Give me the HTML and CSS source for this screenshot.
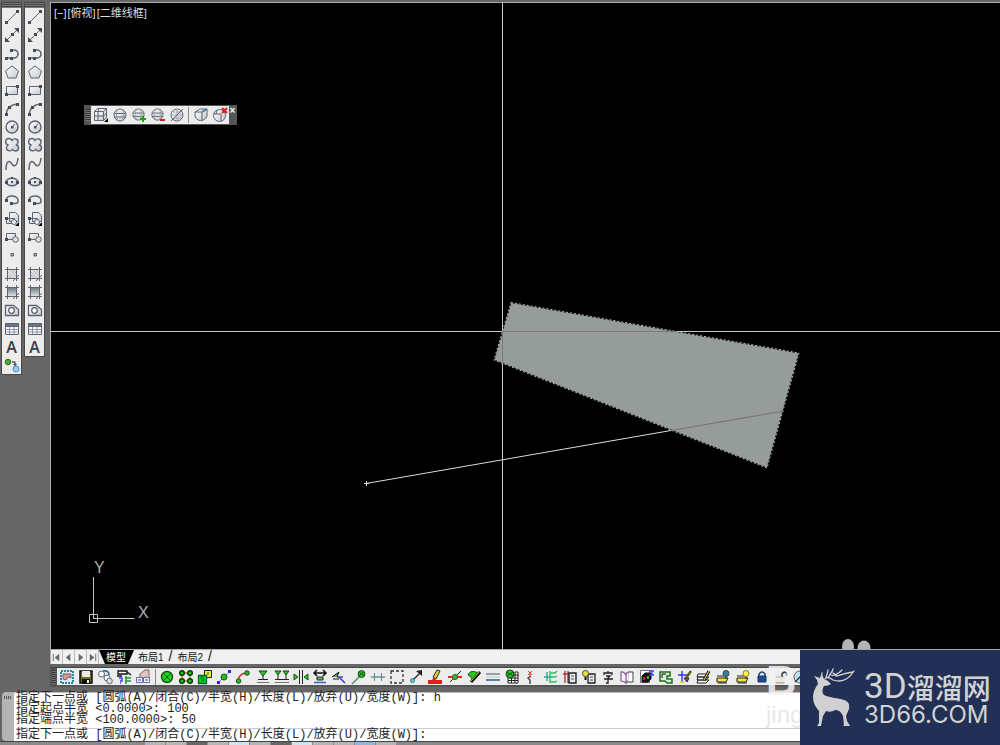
FILE: index.html
```html
<!DOCTYPE html>
<html lang="zh-CN">
<head>
<meta charset="utf-8">
<title>二维线框</title>
<link rel="stylesheet" href="styles.css">
</head>
<body>
<svg class="defs" aria-hidden="true">
  <defs>
    <linearGradient id="sheen" x1="0" y1="0" x2="1" y2="1"><stop offset="0" stop-color="#fff"/><stop offset="1" stop-color="#c3c8d0"/></linearGradient>
    <linearGradient id="shade" x1="0" y1="0" x2="0" y2="1"><stop offset="0" stop-color="#6f7782"/><stop offset="1" stop-color="#e4e6ea"/></linearGradient>
  </defs>
  <symbol id="line" viewBox="0 0 16 16"><path d="M3 13 13 3"/><path class="k" d="M1 12h3v3H1zM12 1h3v3h-3z"/></symbol>
  <symbol id="xline" viewBox="0 0 16 16"><path d="M3 13 13 3"/><path class="k" d="M1 10v5h5zM15 1v5l-5-5zM7 6h3v3H7z"/></symbol>
  <symbol id="pline" viewBox="0 0 16 16"><path stroke-width="1.600" d="M2 12h6M7 4h3a4 4 0 0 1 0 8H8"/><path class="k" d="M1 11h3v3H1zM6 11h3v3H6zM6 3h3v3H6z"/></symbol>
  <symbol id="polygon" viewBox="0 0 16 16"><path fill="url(#sheen)" d="M8 2l6.500 5-2.500 7H4L1.500 7z"/></symbol>
  <symbol id="rect" viewBox="0 0 16 16"><path fill="url(#sheen)" d="M2.500 4.500h11v8h-11z"/><path class="k" d="M1 11h3v3H1zM12 3h3v3h-3z"/></symbol>
  <symbol id="arc" viewBox="0 0 16 16"><path d="M2 14Q3 4 13 3" stroke-width="1.500"/><path class="k" d="M1 12h3v3H1zM4 5h3v3H4zM12 2h3v3h-3z"/></symbol>
  <symbol id="circle" viewBox="0 0 16 16"><circle cx="8" cy="8" r="6" fill="url(#sheen)" stroke-width="1.400"/><path d="M8 8l3-3"/><path class="k" d="M7 7h2.500v2.500H7z"/></symbol>
  <symbol id="cloud" viewBox="0 0 16 16"><path fill="url(#sheen)" d="M8 3.500C9.500 1 14.500 1.500 14 5c0 1.500-1 2.500-1.500 3 3 1 2.500 6-1 6-1.500 0-2-.5-3-1.500-1 2-6 2-6-1.500 0-1.500.5-2 1.500-3C.5 7 1 1.500 5 1.500c1.500 0 2.500 1 3 2z" stroke-width="1.400"/></symbol>
  <symbol id="spline" viewBox="0 0 16 16"><path stroke-width="1.500" d="M2 14C2 3 6 5 8 8s5 3 6-6"/></symbol>
  <symbol id="ellipse" viewBox="0 0 16 16"><ellipse cx="8" cy="8" rx="6" ry="3.800" fill="url(#sheen)" stroke-width="1.400"/><path class="k" d="M1 7h3v3H1zM12 7h3v3h-3zM7 7h2v2H7zM7 3h2v2H7z"/></symbol>
  <symbol id="earc" viewBox="0 0 16 16"><path stroke-width="1.500" d="M2 8c1-6 13-5 12 1 0 3-4 3-6 2"/><path class="k" d="M1 7h3v3H1zM6 10h3v3H6z"/></symbol>
  <symbol id="insert" viewBox="0 0 16 16"><path fill="url(#sheen)" d="M5.500 1.500h6l3 3v6h-9zM2.500 7.500h8v5h-8z"/><circle cx="10" cy="11" r="2.500" fill="#eee"/><path class="k" d="M1 6h3v3H1z"/><path fill="#000" stroke="none" d="M15 11v4h-4z"/></symbol>
  <symbol id="block" viewBox="0 0 16 16"><path fill="url(#sheen)" d="M2.500 4.500h9v6h-9z"/><circle cx="11.500" cy="10.500" r="2.800" fill="#ddd"/><path class="k" d="M1 9h3v3H1z"/></symbol>
  <symbol id="point" viewBox="0 0 16 16"><path fill="#aaa" d="M7 6.500h2.500V9H7z"/></symbol>
  <symbol id="hatch" viewBox="0 0 16 16"><path fill="#dfe1e5" d="M3.500 3.500h9v9h-9z"/><path d="M1 3.500h14M3.500 1v14M1 12.500h14M12.500 1v14"/><path stroke="#a2a7ae" stroke-width=".7" d="M4 6l6 6M4 9l3 3M6 4l6 6M9 4l3 3"/><path d="M9 15l6-6"/></symbol>
  <symbol id="gradient" viewBox="0 0 16 16"><path fill="url(#shade)" d="M3.500 3.500h9v9h-9z"/><path d="M1 3.500h14M3.500 1v14M1 12.500h14M12.500 1v14M9 15l6-6"/></symbol>
  <symbol id="region" viewBox="0 0 16 16"><path fill="url(#sheen)" d="M1.500 3.500h8l5 4v6h-13z" stroke-width="1.300"/><circle cx="7.500" cy="8.500" r="2.800" fill="#fff" stroke-width="1.300"/></symbol>
  <symbol id="table" viewBox="0 0 16 16"><path fill="#fff" d="M1.500 2.500h13v11h-13z"/><path d="M1.500 8.500h13M1.500 11h13M5.500 5v8M10 5v8" stroke="#89919c"/><path fill="#66758d" d="M1.500 2.500h13v3h-13z"/></symbol>
  <symbol id="addsel" viewBox="0 0 16 16"><circle cx="4" cy="5" r="2.800" fill="#4fa62d" stroke="#2f701b"/><circle cx="12" cy="12" r="3" fill="#9ccdf0" stroke="#478ac0"/><path stroke="#111" d="M8 5h3v3M9.500 7 11 8.500 12.500 7"/></symbol>

  <symbol id="cube" viewBox="0 0 16 16"><path fill="url(#sheen)" d="M1.500 4.500l3-3h9v9l-3 3h-9z"/><path d="M1.500 4.500h9v9M10.500 4.500l3-3M6 1.500l-1 3v9M1.500 9h9l3-3"/><path fill="#000" stroke="none" d="M15 11v4h-4z"/></symbol>
  <symbol id="sphere" viewBox="0 0 16 16"><circle cx="8" cy="8" r="6" fill="url(#sheen)"/><path d="M2 6.500h12M2 10h12"/><path stroke="#959ba5" d="M6 2.500C4 5 4 11 6 13.500M10 2.500c2 2 2 9 0 11"/></symbol>
  <symbol id="sphereadd" viewBox="0 0 16 16"><use href="#sphere" width="15" height="15"/><path stroke="#15a315" stroke-width="2" d="M9 12h6M12 9v6"/></symbol>
  <symbol id="spheredel" viewBox="0 0 16 16"><use href="#sphere" width="15" height="15"/><path stroke="#c9231d" stroke-width="2" d="M10 13h5"/></symbol>
  <symbol id="sphereoff" viewBox="0 0 16 16"><circle cx="8" cy="8" r="6" fill="url(#sheen)"/><path stroke="#a5abb4" d="M4 5h8M3 8h10M5 11h7M8 2v12"/><path d="M2 14 14 2"/></symbol>
  <symbol id="cubeball" viewBox="0 0 16 16"><path fill="url(#sheen)" d="M2 5l5-3h7v7c-2 6-11 6-12 0z"/><path d="M2 5h7v9"/><path stroke="#2f83c6" stroke-width="1.500" d="M9 5l5-3"/></symbol>
  <symbol id="cubex" viewBox="0 0 16 16"><circle cx="7.500" cy="8.500" r="6" fill="url(#sheen)"/><path d="M2 7h7v7M5 3l-1 4"/><path stroke="#d92424" stroke-width="2.200" d="M10 1l5 5M15 1l-5 5"/></symbol>

  <symbol id="b1" viewBox="0 0 16 16"><path fill="#d7ecf5" stroke="#2b84aa" stroke-width="2" stroke-dasharray="2 1" d="M2 2h12v12H2z"/><path fill="#d99a94" stroke="#8f5a58" d="M4 5h8v4l-3-1-2 3-3-1z"/></symbol>
  <symbol id="b2" viewBox="0 0 16 16"><path fill="#6d6b14" stroke="#111" stroke-width="1.500" d="M2 2h12v12H2z"/><path fill="#e9e9e9" stroke="none" d="M4 2h8v6H4z"/><path fill="#111" stroke="none" d="M4 10h8v5H4z"/><path fill="#fff" stroke="none" d="M9 11h2v3H9z"/></symbol>
  <symbol id="b3" viewBox="0 0 16 16"><circle cx="4.500" cy="5" r="3" fill="#fff"/><circle cx="10" cy="9" r="3" fill="#fff"/><circle cx="12.500" cy="12" r="2.800" fill="#d8e5ec"/><path stroke="#2a65b0" stroke-width="1.600" d="M6 2q6-1 6 4"/></symbol>
  <symbol id="b4" viewBox="0 0 16 16"><path fill="#fff" stroke="#111" stroke-width="1.300" d="M2 2h9v3H2zM1 7h5M11 3l4 3"/><path stroke="#1e9a31" stroke-width="1.500" d="M9 9h6M9 12h6M10 7v8"/><path stroke="#33f" stroke-width="1.300" d="M3 9h3v3H4M4 14h1"/></symbol>
  <symbol id="b5" viewBox="0 0 16 16"><path fill="#ddc3bd" stroke="#8c6663" d="M5 5l5-4h4v8H5z"/><path fill="#fff" stroke="#6268a8" d="M1.500 8.500h6v5h-6zM8.500 8.500h6v5h-6z"/><path stroke="#22f" d="M3 11h3M10 11h3"/></symbol>
  <symbol id="b6" viewBox="0 0 16 16"><circle cx="8" cy="8" r="5.500" fill="#16d816" stroke="#0c560c" stroke-width="1.400"/><path stroke="#0c560c" d="M4 4l8 8M12 4l-8 8"/></symbol>
  <symbol id="b7" viewBox="0 0 16 16"><path stroke="#c22" d="M4 4h8v8H4z"/><g fill="#16c916" stroke="#063f06" stroke-width="1.500"><circle cx="4" cy="4" r="2.300"/><circle cx="12" cy="4" r="2.300"/><circle cx="4" cy="12" r="2.300"/><circle cx="12" cy="12" r="2.300"/></g></symbol>
  <symbol id="b8" viewBox="0 0 16 16"><path fill="#f3ed23" stroke="#222" d="M7.500 1.500h7v7h-7z"/><path fill="#18d718" stroke="#063" stroke-width="1.300" d="M1.500 6.500h8v8h-8z"/><path stroke="#064" d="M7 8H4v2h3v2H4M11 3v3"/></symbol>
  <symbol id="b9" viewBox="0 0 16 16"><path stroke="#777" d="M2 14 14 2"/><circle cx="8" cy="8" r="3" fill="#24bd24" stroke="#155d15"/><path fill="#22f" stroke="none" d="M1 12h3v3H1zM12 1h3v3h-3z"/></symbol>
  <symbol id="b10" viewBox="0 0 16 16"><path stroke="#d22" stroke-width="1.500" d="M3 12Q4 4 12 4"/><circle cx="12" cy="4" r="2.300" fill="#2b2" stroke="#151"/><circle cx="3.500" cy="12" r="2.300" fill="#2b2" stroke="#151"/></symbol>
  <symbol id="b11" viewBox="0 0 16 16"><path fill="#20d020" stroke="#154815" d="M4 2h8L8 7z"/><path stroke="#222" d="M8 7v4M3 10.500h10"/><path stroke="#777" d="M2 13.500h12"/></symbol>
  <symbol id="b12" viewBox="0 0 16 16"><path fill="#20d020" stroke="#154815" d="M1 2h6L4 6zM9 2h6l-3 4z"/><path stroke="#222" d="M4 6v4M12 6v4M1 10.500h14"/><path stroke="#777" d="M1 13.500h14"/></symbol>
  <symbol id="b13" viewBox="0 0 16 16"><path stroke="#222" d="M6.500 1v14M9.500 1v14"/><path fill="#23d423" stroke="#174f17" d="M1 5v6l4-3zM15 5v6l-4-3z"/></symbol>
  <symbol id="b14" viewBox="0 0 16 16"><path stroke="#111" stroke-width="1.500" d="M2 4h12M5 1 2 4l3 3M11 1l3 3-3 3"/><path fill="#5ac05a" stroke="#222" d="M5 8h6v3H5z"/><path stroke="#36c" stroke-width="1.500" d="M2 13.500h12"/></symbol>
  <symbol id="b15" viewBox="0 0 16 16"><path fill="#51b451" stroke="#111" d="M1 8l7-5-2 5h6"/><path stroke="#33e" stroke-width="1.500" d="M8 8l6 6"/><path stroke="#111" d="M2 10h6"/></symbol>
  <symbol id="b16" viewBox="0 0 16 16"><path stroke="#58917b" stroke-width="1.600" d="M1 15 9 7"/><circle cx="10.500" cy="5" r="3.500" fill="#21c821" stroke="#145714"/><path stroke="#145714" d="M8 3l5 4M13 3 8 7"/></symbol>
  <symbol id="b17" viewBox="0 0 16 16"><path stroke="#a85aa8" d="M4.500 4v8M11.500 4v8"/><path stroke="#4a9999" stroke-width="1.400" d="M1 8h14"/></symbol>
  <symbol id="b18" viewBox="0 0 16 16"><path stroke="#333" stroke-width="1.300" stroke-dasharray="3 2" d="M2 2h12v12H2z"/></symbol>
  <symbol id="b19" viewBox="0 0 16 16"><path stroke="#333" stroke-width="1.500" d="M5 11l7-7"/><path fill="#222" stroke="none" d="M14 1v6L8 2z"/><circle cx="4.500" cy="11.500" r="2" fill="#66cde0" stroke="#287c90"/></symbol>
  <symbol id="b20" viewBox="0 0 16 16"><path fill="#ead62a" stroke="#222" d="M6 8l4-7 3 1-4 8z"/><path fill="#e01d16" stroke="none" d="M1 11h4l2-3 2 3h6v4H1z"/></symbol>
  <symbol id="b21" viewBox="0 0 16 16"><path stroke="#e22" stroke-width="2" d="M1 8h14"/><path stroke="#222" d="M3 13 14 2"/><circle cx="8" cy="8" r="2.600" fill="#37bb23" stroke="#286817"/></symbol>
  <symbol id="b22" viewBox="0 0 16 16"><path fill="#24cb24" stroke="#126012" d="M2 6q2-5 8-3l2 1-5 8-2-4z"/><path stroke="#111" stroke-width="3" d="M5 13l9-10"/><path stroke="#e9d332" d="M5 12l8-9"/></symbol>
  <symbol id="b23" viewBox="0 0 16 16"><path stroke="#789" stroke-width="1.500" d="M1 5h14"/><path stroke="#d9cba7" d="M1 8h14"/><path stroke="#5682b5" stroke-width="2" d="M1 11h14"/></symbol>
  <symbol id="b24" viewBox="0 0 16 16"><path fill="#fff" stroke="#222" d="M4 6h10v8H4zM4 9h10M4 11.500h10M7.500 6v8M11 3v11M11 3h3v4"/><circle cx="6" cy="5" r="4" fill="#1fcd1f" stroke="#164716"/><path stroke="#164716" d="M3 3l6 4M9 3 3 7"/></symbol>
  <symbol id="b25" viewBox="0 0 16 16"><path stroke="#e33" d="M5 2l4 4M9 2 5 6M7 5v3"/><path stroke="#444" stroke-width="1.400" d="M8 7l-3 2 2 2v4"/></symbol>
  <symbol id="b26" viewBox="0 0 16 16"><path stroke="#3a9ea5" stroke-width="1.400" d="M1 8h7M4 3v9"/><path stroke="#30bd60" stroke-width="1.300" d="M14 2l-2 2H7M14 7l-2 1H7M14 12l-2 1H7M7 2v12"/></symbol>
  <symbol id="b27" viewBox="0 0 16 16"><path stroke="#b23b3b" stroke-width="1.400" d="M1 5h6M3 2v12M6 2v12"/><path fill="#e8e8e8" stroke="#222" stroke-width="1.400" d="M7 4h7v10H7z"/><path stroke="#555" d="M9 7h3M9 10h3"/></symbol>
  <symbol id="b28" viewBox="0 0 16 16"><path fill="#e8e8e8" stroke="#222" stroke-width="1.300" d="M7 5h7v9H7z"/><path stroke="#555" d="M9 8h3M9 11h3"/><circle cx="4.500" cy="4.500" r="3" fill="#eee13e" stroke="#443"/><path stroke="#111" stroke-width="2" d="M4.500 8v3"/></symbol>
  <symbol id="b29" viewBox="0 0 16 16"><path stroke="#222" stroke-width="1.300" d="M8 2v2M4 6V4h8v2M6 7h4l-2 2v5H6M4 10h9"/></symbol>
  <symbol id="b30" viewBox="0 0 16 16"><path fill="#f6f6f6" stroke="#845a91" stroke-width="1.200" d="M2 3q3-1 5 3v8q-2-2-5-2zM7 6q0-3 3-3v8l-3 3"/><path fill="#fff" stroke="#444" d="M10 3h4v10H9"/></symbol>
  <symbol id="b31" viewBox="0 0 16 16"><path fill="#fff" stroke="#777" d="M1.500 1.500h9v12h-9z"/><path fill="#111" stroke="#111" d="M3 7l3-3h6v6l-3 3H3z"/><path fill="#e22" stroke="none" d="M4 8h2v3H4z"/><path fill="#2b2" stroke="none" d="M8 7h2v3H8z"/><path stroke="#34f" stroke-width="1.300" d="M10 2h5M13 2v4M10 6h5"/></symbol>
  <symbol id="b32" viewBox="0 0 16 16"><path fill="#d7edd7" stroke="#1d6f1d" stroke-width="1.500" d="M2 3h10v4H9v3h5v4H9l-2-2H2z"/><path stroke="#111" d="M4 5h4M4 5v4"/></symbol>
  <symbol id="b33" viewBox="0 0 16 16"><path stroke="#33f" stroke-width="1.400" d="M1 6h10M5 2v12"/><path fill="#8048a4" stroke="#222" d="M7 9l3 4 2-4z"/><path stroke="#55631d" stroke-width="2.500" d="M9 9l5-7"/><path stroke="#ed2" stroke-width="1.500" d="M3 13h5"/></symbol>
  <symbol id="b34" viewBox="0 0 16 16"><path fill="#fff" stroke="#222" d="M2 5h11l-3 3H1zM2 8h11l-3 3H1zM2 11h11l-3 3H1z"/><path stroke="#222" stroke-width="3" d="M8 11l5-9"/><path stroke="#e8d744" d="M8 11l5-9"/></symbol>
  <symbol id="b35" viewBox="0 0 16 16"><path fill="#efe63c" stroke="#222" d="M2 9h11l-2 4H2z"/><path stroke="#222" d="M2 7h10M3 14h9"/><circle cx="11" cy="4.500" r="3" fill="#377f91" stroke="#244e59"/><path stroke="#222" d="M11 8v2"/></symbol>
  <symbol id="b36" viewBox="0 0 16 16"><path fill="#efe63c" stroke="#222" d="M2 9h11l-2 4H2z"/><path stroke="#222" d="M2 7h10M3 14h9"/><circle cx="11" cy="4.500" r="3" fill="#fff64b" stroke="#877c22"/><path stroke="#222" d="M11 8v2"/></symbol>
  <symbol id="b37" viewBox="0 0 16 16"><path stroke="#234579" stroke-width="1.500" d="M5 8V5q3-4 6 0v3"/><path fill="#164e96" stroke="#183663" d="M4 7h8v6H4z"/></symbol>
  <symbol id="b38" viewBox="0 0 16 16"><path stroke="#333" stroke-width="1.500" d="M9 8V5q3-4 5 0v2"/><path fill="#cbbe72" stroke="#aaa" d="M3 8h8v6H3z"/></symbol>
  <symbol id="b39" viewBox="0 0 16 16"><circle cx="8" cy="8" r="6" fill="#bde4e9"/><path stroke="#333" stroke-width="1.400" d="M3 13 13 3"/></symbol>
</svg>

<main class="workspace">
  <aside class="palettes">
    <nav class="palette" aria-label="绘图">
      <span class="grip"></span>
      <button aria-label="直线"><svg><use href="#line"/></svg></button>
      <button aria-label="构造线"><svg><use href="#xline"/></svg></button>
      <button aria-label="多段线"><svg><use href="#pline"/></svg></button>
      <button aria-label="多边形"><svg><use href="#polygon"/></svg></button>
      <button aria-label="矩形"><svg><use href="#rect"/></svg></button>
      <button aria-label="圆弧"><svg><use href="#arc"/></svg></button>
      <button aria-label="圆"><svg><use href="#circle"/></svg></button>
      <button aria-label="修订云线"><svg><use href="#cloud"/></svg></button>
      <button aria-label="样条曲线"><svg><use href="#spline"/></svg></button>
      <button aria-label="椭圆"><svg><use href="#ellipse"/></svg></button>
      <button aria-label="椭圆弧"><svg><use href="#earc"/></svg></button>
      <button aria-label="插入块"><svg><use href="#insert"/></svg></button>
      <button aria-label="创建块"><svg><use href="#block"/></svg></button>
      <button aria-label="点"><svg><use href="#point"/></svg></button>
      <button aria-label="图案填充"><svg><use href="#hatch"/></svg></button>
      <button aria-label="渐变色"><svg><use href="#gradient"/></svg></button>
      <button aria-label="面域"><svg><use href="#region"/></svg></button>
      <button aria-label="表格"><svg><use href="#table"/></svg></button>
      <button aria-label="多行文字" class="letter">A</button>
      <button aria-label="添加选定对象"><svg><use href="#addsel"/></svg></button>
    </nav>
    <nav class="palette" aria-label="绘图 2">
      <span class="grip"></span>
      <button aria-label="直线"><svg><use href="#line"/></svg></button>
      <button aria-label="构造线"><svg><use href="#xline"/></svg></button>
      <button aria-label="多段线"><svg><use href="#pline"/></svg></button>
      <button aria-label="多边形"><svg><use href="#polygon"/></svg></button>
      <button aria-label="矩形"><svg><use href="#rect"/></svg></button>
      <button aria-label="圆弧"><svg><use href="#arc"/></svg></button>
      <button aria-label="圆"><svg><use href="#circle"/></svg></button>
      <button aria-label="修订云线"><svg><use href="#cloud"/></svg></button>
      <button aria-label="样条曲线"><svg><use href="#spline"/></svg></button>
      <button aria-label="椭圆"><svg><use href="#ellipse"/></svg></button>
      <button aria-label="椭圆弧"><svg><use href="#earc"/></svg></button>
      <button aria-label="插入块"><svg><use href="#insert"/></svg></button>
      <button aria-label="创建块"><svg><use href="#block"/></svg></button>
      <button aria-label="点"><svg><use href="#point"/></svg></button>
      <button aria-label="图案填充"><svg><use href="#hatch"/></svg></button>
      <button aria-label="渐变色"><svg><use href="#gradient"/></svg></button>
      <button aria-label="面域"><svg><use href="#region"/></svg></button>
      <button aria-label="表格"><svg><use href="#table"/></svg></button>
      <button aria-label="多行文字" class="letter">A</button>
    </nav>
  </aside>

  <section class="stage">
    <div class="canvas">
      <svg class="drawing" aria-label="图形">
        <g transform="translate(-51 -3)">
          <path fill="#959c99" d="M511 302.500 799 353 767 468 494 360z"/>
          <path class="edge-gap" d="M511 302.500 799 353 767 468 494 360z"/>
          <path class="edge" d="M511 302.500 799 353 767 468 494 360z"/>
          <g class="cross"><path d="M51 331.500h452M677 331.500h2000M502.500 3v328M502.500 363v1600"/></g>
          <g class="cross-in"><path d="M503 331.500h174M502.500 331v32"/></g>
          <path class="ray" d="M366 483.500 671 430.500"/>
          <path class="ray-in" d="M671 430.500 784 411"/>
          <path class="ray" d="M364 483.500h5M366.500 481v5"/>
          <g class="ucs">
            <path d="M93.500 577v41.500h41M89.500 614.500h8v8h-8zM93.500 618.500h4"/>
            <text x="94" y="573">Y</text><text x="138" y="618">X</text>
          </g>
          <g fill="#b4b4b4"><ellipse cx="848" cy="647" rx="6" ry="8"/><ellipse cx="864" cy="648" rx="6.500" ry="7.500"/></g>
        </g>
      </svg>
      <div class="view-label"><button>[−]</button><button>[俯视]</button><button>[二维线框]</button></div>
      <div class="float-bar" role="toolbar" aria-label="曲面">
        <span class="float-grip"></span>
        <div class="float-tools">
          <button aria-label="长方体"><svg><use href="#cube"/></svg></button>
          <button aria-label="平滑对象"><svg><use href="#sphere"/></svg></button>
          <button aria-label="提高平滑度"><svg><use href="#sphereadd"/></svg></button>
          <button aria-label="降低平滑度"><svg><use href="#spheredel"/></svg></button>
          <button aria-label="优化网格"><svg><use href="#sphereoff"/></svg></button>
          <i class="rule"></i>
          <button aria-label="添加锐化"><svg><use href="#cubeball"/></svg></button>
          <button aria-label="删除锐化"><svg><use href="#cubex"/></svg></button>
        </div>
        <button class="close" aria-label="关闭">×</button>
      </div>
    </div>

    <nav class="tabs" aria-label="布局">
      <button class="step" aria-label="第一个"><svg viewBox="0 0 12 12"><path d="M2.500 2v8"/><path class="tri" d="M9 2v8L4 6z"/></svg></button>
      <button class="step" aria-label="上一个"><svg viewBox="0 0 12 12"><path class="tri" d="M8 2v8L3 6z"/></svg></button>
      <button class="step" aria-label="下一个"><svg viewBox="0 0 12 12"><path class="tri" d="M4 2v8l5-4z"/></svg></button>
      <button class="step" aria-label="最后一个"><svg viewBox="0 0 12 12"><path d="M9.500 2v8"/><path class="tri" d="M3 2v8l5-4z"/></svg></button>
      <button class="tab active">模型</button>
      <button class="tab">布局1</button><span class="slash">/</span>
      <button class="tab">布局2</button><span class="slash">/</span>
    </nav>

    <div class="tools" role="toolbar" aria-label="扩展工具">
      <span class="tools-grip"></span>
      <div class="set">
        <button aria-label="图像"><svg><use href="#b1"/></svg></button>
        <button aria-label="保存"><svg><use href="#b2"/></svg></button>
        <button aria-label="替换"><svg><use href="#b3"/></svg></button>
        <button aria-label="查询"><svg><use href="#b4"/></svg></button>
        <button aria-label="比较"><svg><use href="#b5"/></svg></button>
      </div>
      <i class="rule"></i>
      <div class="set wide">
        <button aria-label="工具 1"><svg><use href="#b6"/></svg></button>
        <button aria-label="工具 2"><svg><use href="#b7"/></svg></button>
        <button aria-label="工具 3"><svg><use href="#b8"/></svg></button>
        <button aria-label="工具 4"><svg><use href="#b9"/></svg></button>
        <button aria-label="工具 5"><svg><use href="#b10"/></svg></button>
        <button aria-label="工具 6"><svg><use href="#b11"/></svg></button>
        <button aria-label="工具 7"><svg><use href="#b12"/></svg></button>
        <button aria-label="工具 8"><svg><use href="#b13"/></svg></button>
        <button aria-label="工具 9"><svg><use href="#b14"/></svg></button>
        <button aria-label="工具 10"><svg><use href="#b15"/></svg></button>
        <button aria-label="工具 11"><svg><use href="#b16"/></svg></button>
        <button aria-label="工具 12"><svg><use href="#b17"/></svg></button>
        <button aria-label="工具 13"><svg><use href="#b18"/></svg></button>
        <button aria-label="工具 14"><svg><use href="#b19"/></svg></button>
        <button aria-label="工具 15"><svg><use href="#b20"/></svg></button>
        <button aria-label="工具 16"><svg><use href="#b21"/></svg></button>
        <button aria-label="工具 17"><svg><use href="#b22"/></svg></button>
        <button aria-label="工具 18"><svg><use href="#b23"/></svg></button>
        <button aria-label="工具 19"><svg><use href="#b24"/></svg></button>
        <button aria-label="工具 20"><svg><use href="#b25"/></svg></button>
        <button aria-label="工具 21"><svg><use href="#b26"/></svg></button>
        <button aria-label="工具 22"><svg><use href="#b27"/></svg></button>
        <button aria-label="工具 23"><svg><use href="#b28"/></svg></button>
        <button aria-label="工具 24"><svg><use href="#b29"/></svg></button>
        <button aria-label="工具 25"><svg><use href="#b30"/></svg></button>
        <button aria-label="工具 26"><svg><use href="#b31"/></svg></button>
        <button aria-label="工具 27"><svg><use href="#b32"/></svg></button>
        <button aria-label="工具 28"><svg><use href="#b33"/></svg></button>
        <button aria-label="工具 29"><svg><use href="#b34"/></svg></button>
        <button aria-label="工具 30"><svg><use href="#b35"/></svg></button>
        <button aria-label="工具 31"><svg><use href="#b36"/></svg></button>
        <button aria-label="锁定"><svg><use href="#b37"/></svg></button>
        <button aria-label="解锁"><svg><use href="#b38"/></svg></button>
        <button aria-label="工具 34"><svg><use href="#b39"/></svg></button>
      </div>
    </div>
  </section>
</main>

<section class="command" aria-label="命令行">
  <span class="command-grip"></span>
  <div class="console">
    <div class="history">
      <p>指定下一点或 [圆弧(A)/闭合(C)/半宽(H)/长度(L)/放弃(U)/宽度(W)]: h</p>
      <p>指定起点半宽 &lt;0.0000&gt;: 100</p>
      <p>指定端点半宽 &lt;100.0000&gt;: 50</p>
    </div>
    <p class="prompt">指定下一点或 [圆弧(A)/闭合(C)/半宽(H)/长度(L)/放弃(U)/宽度(W)]:</p>
  </div>
</section>
<footer class="status"><i></i><i></i><i class="dark"></i><i></i><i class="lit"></i><i></i><i class="dark"></i><i class="lit"></i><i></i><i></i><i class="blue"></i><i></i></footer>

<div class="watermark" aria-hidden="true"><span class="wm-big">B</span><span class="wm-small">jing</span></div>
<div class="badge">
  <svg class="deer" viewBox="0 0 44 60" role="img" aria-label="鹿">
    <path fill="#d0d0d0" d="M2 9l6 2 1-3 3 4 4 2 3 3-3 1.500-4 .5c-2 3-2 7 0 9 6 3 14 3 20 5 4 1 6 4 5 9l-3 7 1 5 3 5h-7l1-1-1-9c-2-4-4-6-8-6-3 2-6 2-9 1l-3 5-2 10H5l2-3V44C3 40 1 35 1 30c0-5 2-9 5-13l-1-4z"/>
    <path fill="none" stroke="#d0d0d0" stroke-width="1.300" stroke-linecap="round" d="M11 12c-1-3-2-4-1-6M13 12c2-3 5-1 8 1 9 3 16-1 21-9M14 11c0-3 2-4 2-8M17 11c-1-4 3-4 4-9M21 6l3 2M19 8c3 1 7-1 11-5M24 9c5-1 9-3 17-4"/>
  </svg>
  <div class="brand">
    <div class="brand-top"><span class="latin">3D</span><span class="han">溜溜网</span></div>
    <div class="brand-url">3D66.COM</div>
  </div>
</div>
</body>
</html>
```
FILE: styles.css
```css
* { box-sizing: border-box; }

body {
  margin: 0;
  height: 100vh;
  display: flex;
  flex-direction: column;
  overflow: hidden;
  background: #666;
  font-family: "Liberation Sans", "Noto Sans CJK SC", sans-serif;
}

.defs { position: absolute; width: 0; height: 0; }

.k { fill: #454d59; stroke: none; }

button {
  border: 0;
  margin: 0;
  padding: 0;
  background: none;
  color: inherit;
  font: inherit;
}

button svg {
  display: block;
  width: 16px;
  height: 16px;
  fill: none;
  stroke: #5c6470;
  overflow: visible;
}

p { margin: 0; }

.workspace { flex: 1; display: flex; min-height: 0; padding-top: 2px; }

.palettes {
  flex: none;
  width: 50px;
  display: flex;
  align-items: flex-start;
  gap: 2px;
  padding-left: 1px;
}

.palette {
  width: 21px;
  display: flex;
  flex-direction: column;
  background: #ececec;
  border: 1px solid #484848;
  border-top: 0;
}

.palette button {
  flex: none;
  height: 18px;
  display: grid;
  place-items: center;
}

.palette button:nth-child(3n + 4) { height: 19px; }

.grip {
  height: 6px;
  background: repeating-linear-gradient(#444 0 1px, #777 1px 2px);
}

.palette .letter {
  font: 600 16px/18px "Open Sans", sans-serif;
  color: #383d44;
}

.stage { flex: 1; min-width: 0; display: flex; flex-direction: column; }

.canvas {
  flex: 1;
  position: relative;
  min-height: 0;
  overflow: hidden;
  background: #000;
  border-top: 1px solid #aaa;
  border-left: 1px solid #aaa;
}

.drawing { position: absolute; inset: 0; width: 100%; height: 100%; fill: none; }
.edge-gap { stroke: #000; }
.edge { stroke: #bcc1bf; stroke-dasharray: 2 2; }
.cross { stroke: #c8c8c8; }
.cross-in { stroke: #787978; }
.ray { stroke: #ddd; }
.ray-in { stroke: #727272; }
.ucs { stroke: #c4c4c4; }
.ucs text { fill: #b0b0b0; stroke: none; font: 16px "Liberation Sans", sans-serif; }

.view-label {
  position: relative;
  display: flex;
  gap: 1px;
  padding: 3px;
  color: #ddd;
  font: 11px/14px "Liberation Sans", "Noto Sans CJK SC", sans-serif;
}

.float-bar {
  position: absolute;
  left: 33px;
  top: 102px;
  display: flex;
  height: 20px;
  background: #ececec;
  border: 1px solid #555;
}

.float-grip {
  width: 6px;
  border: 1px solid #555;
  border-width: 3px 1px;
  background: repeating-linear-gradient(#333 0 1px, #777 1px 2px);
}

.float-tools { display: flex; align-items: center; }
.float-tools button { width: 19px; display: grid; place-items: center; }
.rule { width: 1px; height: 16px; margin: 0 2px; background: #888; }

.close {
  width: 7px;
  background: #555;
  color: #fff;
  font: 700 10px/10px "Liberation Sans", sans-serif;
  align-self: stretch;
  display: flex;
  justify-content: center;
}

.tabs {
  height: 15px;
  display: flex;
  align-items: stretch;
  background: #f0f0f0;
  border-left: 1px solid #aaa;
  border-top: 1px solid #aaa;
  font: 10px/13px "Liberation Sans", "Noto Sans CJK SC", sans-serif;
  color: #111;
}

.step { width: 12px; display: grid; place-items: center; border-right: 1px solid #bbb; }
.step svg { width: 11px; height: 11px; stroke: #666; }
.step .tri { fill: #666; stroke: none; }
.tab { padding: 0 4px; }

.tab.active {
  padding: 0 8px 0 7px;
  background: #000;
  color: #fff;
  clip-path: polygon(0 0, 100% 0, calc(100% - 6px) 100%, 6px 100%);
}

.slash { font-size: 14px; padding: 0 1px; }

.tools {
  height: 20px;
  margin: 3px 0 5px;
  display: flex;
  align-items: center;
  background: #ececec;
  border-top: 1px solid #444;
  border-bottom: 2px solid #555;
  overflow: hidden;
}

.tools-grip {
  flex: none;
  width: 7px;
  height: 18px;
  border: 2px solid #555;
  background: repeating-linear-gradient(#333 0 1px, #777 1px 2px);
}

.set { flex: none; width: 96px; display: flex; }
.set.wide { width: 653px; }
.set button { flex: 1; display: grid; place-items: center; }
.tools .rule { margin: 0 1px 0 2px; }

.command {
  height: 50px;
  display: flex;
  padding-left: 2px;
  border-bottom: 1px solid #444;
}

.command-grip {
  width: 12px;
  padding: 4px 2px;
  background: #b4b4b4;
  border-radius: 4px 0 0 4px;
}

.command-grip::before {
  content: "";
  display: block;
  height: 3px;
  background: repeating-linear-gradient(90deg, #555 0 1px, #b4b4b4 1px 2px);
}

.console {
  flex: 1;
  min-width: 0;
  border-top: 1px solid #bbb;
  background: #fff;
  padding-left: 2px;
  font: 12px/11px "Liberation Mono", "Noto Sans CJK SC", monospace;
  color: #222;
  white-space: nowrap;
}

.history { height: 36px; border-bottom: 1px solid #ccc; }
.history p { height: 11px; }
.prompt { padding-top: 1px; }

.status {
  height: 3px;
  display: flex;
  gap: 1px;
  padding-left: 145px;
  background: #8a8a8a;
}

.status i { width: 20px; background: #b5b5b5; }
.status .dark { background: #666; }
.status .lit { background: #cfe4ef; }
.status .blue { background: #8fb6dc; }

.watermark {
  position: absolute;
  right: 0;
  bottom: 18px;
  width: 234px;
  display: flex;
  flex-direction: column;
}

.wm-big { font: 700 42px/44px "Liberation Sans", sans-serif; color: #f4f4f4; opacity: .85; }
.wm-small { font: 24px/24px "Liberation Sans", sans-serif; color: #e8e8e8; }

.badge {
  position: absolute;
  right: 0;
  bottom: 0;
  width: 200px;
  height: 95px;
  display: flex;
  gap: 8px;
  padding: 17px 8px 0 12px;
  background: #223055;
  color: #d2d2d2;
}

.deer { flex: none; width: 44px; height: 60px; overflow: visible; }
.brand-top { display: flex; align-items: center; height: 36px; padding-top: 4px; }
.latin { font: 35px/34px Roboto, sans-serif; }
.han { font: 500 28px/34px "Noto Sans CJK SC", sans-serif; }
.brand-url { font: 24px/24px Inter, sans-serif; }
```
